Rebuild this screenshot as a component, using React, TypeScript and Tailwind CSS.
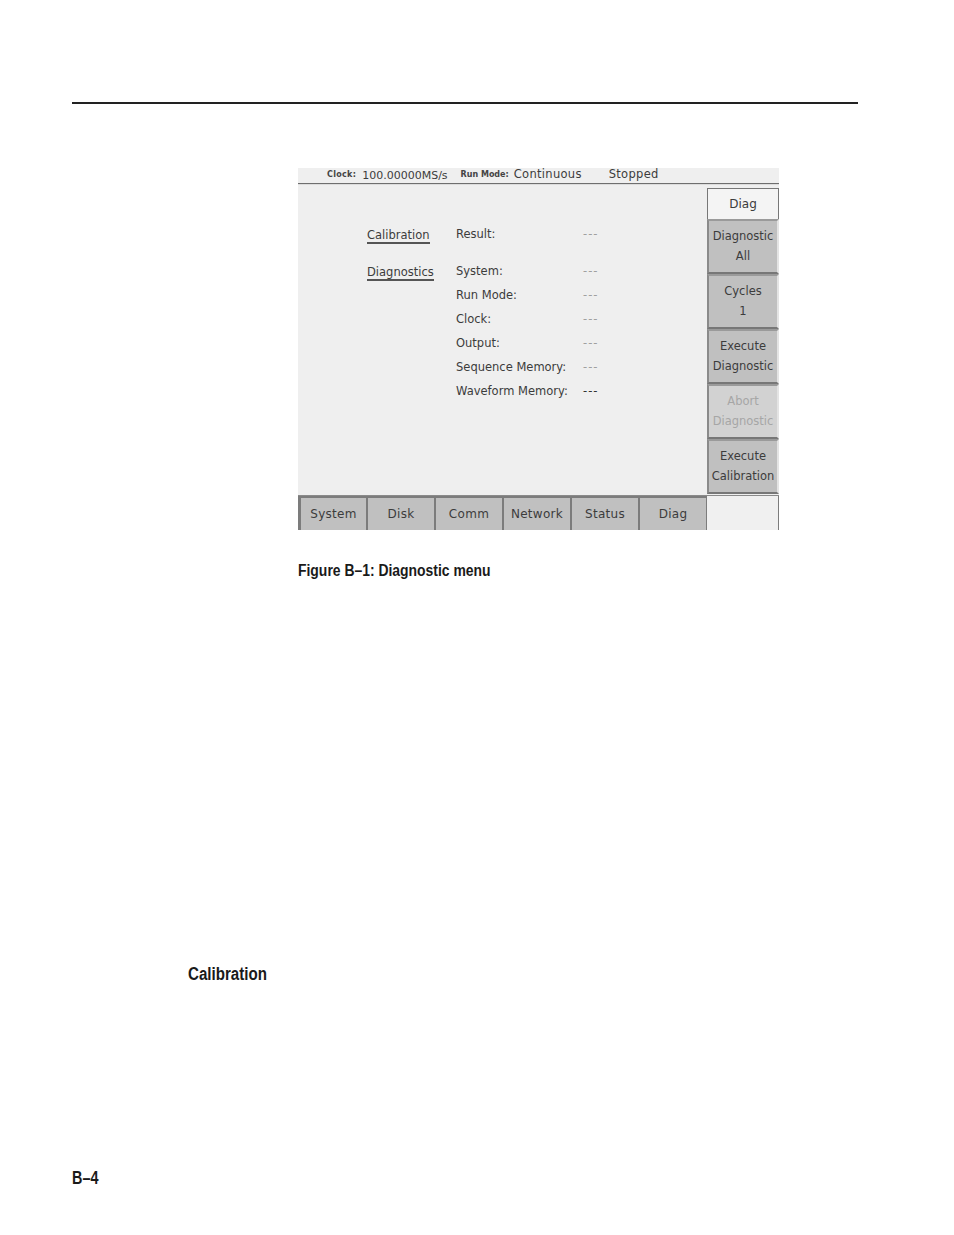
const rows = [
  { link: "Calibration", label: "Result:" },
  { link: "Diagnostics", label: "System:" },
  { label: "Run Mode:" },
  { label: "Clock:" },
  { label: "Output:" },
  { label: "Sequence Memory:" },
  { label: "Waveform Memory:", dark: true },
];

const sideButtons = [
  { top: "Diagnostic", bottom: "All" },
  { top: "Cycles", bottom: "1" },
  { top: "Execute", bottom: "Diagnostic" },
  { top: "Abort", bottom: "Diagnostic", disabled: true },
  { top: "Execute", bottom: "Calibration" },
];

const tabs = ["System", "Disk", "Comm", "Network", "Status", "Diag"];

const ui = "font-['DejaVu_Sans',sans-serif]";

function Screen() {
  return (
    <div className={`w-[481px] h-[362px] flex flex-col bg-[#efefef] text-[#3c3c3c] ${ui}`}>
      {/* status bar */}
      <div className="h-[15px] flex items-center text-[11px] leading-none">
        <span className="ml-[29px] text-[8px] font-bold tracking-[0.3px] text-[#444]">Clock:</span>
        <span className="ml-[6px]">100.00000MS/s</span>
        <span className="ml-[13px] text-[8px] font-bold text-[#444]">Run Mode:</span>
        <span className="ml-[5px] text-[11.5px] tracking-[0.3px]">Continuous</span>
        <span className="ml-[27px] text-[11.5px] tracking-[0.3px]">Stopped</span>
      </div>
      <div className="h-[2px] border-t border-[#6e6e6e] bg-[#dcdcdc]" />

      <div className="flex flex-1">
        {/* readouts */}
        <div className="w-[409px] pt-[42px] text-[11.5px]">
          {rows.map((r, i) => (
            <div key={r.label} className={`flex h-[24px] items-start ${i === 0 ? "mb-[13px]" : ""}`}>
              <div className="w-[69px] shrink-0" />
              <div className="w-[89px] shrink-0">
                {r.link && (
                  <span className="inline-block border-b-2 border-[#555] leading-[14px]">{r.link}</span>
                )}
              </div>
              <div className="w-[127px] shrink-0 leading-[14px]">{r.label}</div>
              <div className={`leading-[14px] tracking-[1px] ${r.dark ? "text-[#333]" : "text-[#a0a0a0]"}`}>---</div>
            </div>
          ))}
        </div>

        {/* side menu */}
        <div className="w-[72px] pt-[3px] flex flex-col">
          <div className="h-[31px] bg-[#f4f4f4] border-l border-t border-r border-[#777] flex items-center justify-center text-[12px]">
            Diag
          </div>
          {sideButtons.map((b, i) => (
            <div
              key={i}
              className={`h-[55px] border-2 border-t-[#9a9a9a] border-l-[#8a8a8a] border-r-[#e4e4e4] border-b-[#777] flex flex-col items-center justify-center text-[11.5px] leading-[20px] ${
                b.disabled ? "bg-[#d2d2d2] text-[#a6a6a6]" : "bg-[#c0c0c0] text-[#3c3c3c]"
              }`}
            >
              <span>{b.top}</span>
              <span>{b.bottom}</span>
            </div>
          ))}
        </div>
      </div>

      {/* bottom tabs */}
      <div className="h-[35px] flex border-t border-[#8a8a8a]">
        {tabs.map((t, i) => (
          <div
            key={t}
            className={`w-[68px] shrink-0 flex items-center justify-center bg-[#c0c0c0] border-l-2 border-t-2 border-[#7c7c7c] text-[12px] tracking-[0.3px] ${
              i === 0 ? "border-l-[3px]" : ""
            }`}
          >
            {t}
          </div>
        ))}
        <div className="flex-1 border-l border-r border-[#7c7c7c] bg-[#f0f0f0]" />
      </div>
    </div>
  );
}

export default function App() {
  return (
    <div className="w-[954px] h-[1235px] bg-white font-['Liberation_Sans',sans-serif] text-[#1a1a1a]">
      <div className="pt-[102px]">
        <div className="ml-[72px] w-[786px] h-[1.5px] bg-[#222]" />
      </div>
      <div className="ml-[298px] mt-[64px]">
        <Screen />
      </div>
      <div className="ml-[298px] mt-[33px] leading-none">
        <span className="inline-block origin-left scale-x-[0.87] text-[16px] font-bold whitespace-nowrap">
          Figure B–1: Diagnostic menu
        </span>
      </div>
      <div className="ml-[188px] mt-[386px] leading-none">
        <span className="inline-block origin-left scale-x-[0.84] text-[18px] font-bold">Calibration</span>
      </div>
      <div className="ml-[72px] mt-[186px] leading-none">
        <span className="inline-block origin-left scale-x-[0.8] text-[18px] font-bold">B–4</span>
      </div>
    </div>
  );
}
